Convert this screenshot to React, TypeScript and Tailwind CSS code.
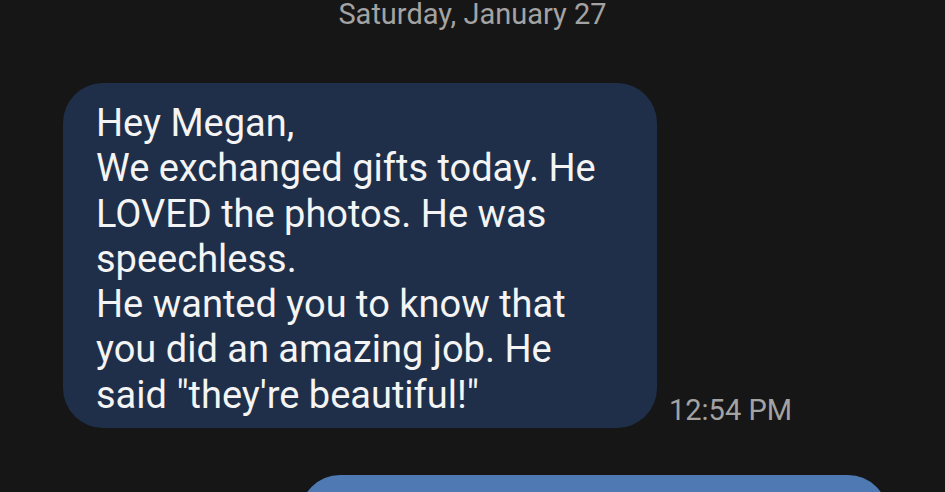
const message = [
  "Hey Megan,",
  "We exchanged gifts today. He LOVED the photos. He was speechless.",
  "He wanted you to know that you did an amazing job. He said \"they're beautiful!\"",
];

const App = () => {
  return (
    <div className="w-[945px] h-[492px] overflow-hidden bg-[#161616] font-['Roboto',sans-serif]">
      <div className="text-center text-[29px] leading-[29px] text-[#a3a3a3]">
        Saturday, January 27
      </div>

      <div className="mt-[54px] flex items-end pl-[63px]">
        <div className="w-[594px] shrink-0 rounded-[40px] bg-[#1f2f49] pl-[33px] pr-[40px] pt-[18px] pb-[10px] text-[38px] leading-[45.3px] text-[#f4f4f4]">
          {message.map((line) => (
            <p key={line}>{line}</p>
          ))}
        </div>
        <span className="ml-[12px] mb-[1px] text-[29px] leading-[34px] text-[#a3a3a3]">12:54 PM</span>
      </div>

      <div className="mt-[47px] ml-[300px] h-[80px] w-[588px] rounded-[40px] bg-[#4e79b3]"></div>
    </div>
  );
};

export default App;
